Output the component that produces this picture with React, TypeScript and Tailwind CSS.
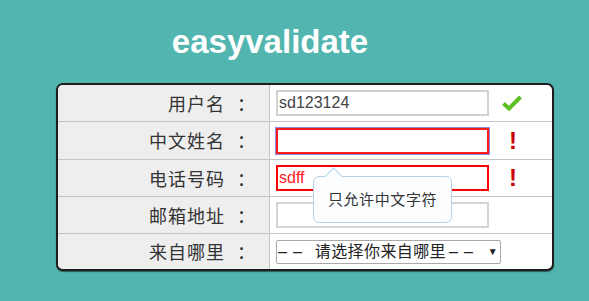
import { ReactNode } from 'react'

const CJK = "font-['Noto_Sans_CJK_SC',sans-serif]"
const SANS = "font-['Liberation_Sans','Noto_Sans_CJK_SC',sans-serif]"

function Check() {
  return (
    <svg width="20" height="16" viewBox="0 0 20 16" className="ml-[13px]">
      <path d="M1.5 8.5 L7 13.5 L18.5 2" fill="none" stroke="#5cbf24" strokeWidth="4" strokeLinejoin="miter" />
    </svg>
  )
}

function Bang() {
  return <span className={`ml-[20px] text-[24px] font-bold leading-none text-[#cc0000] ${SANS}`}>!</span>
}

function Dashes() {
  return (
    <span className="flex gap-[6px]">
      <span>–</span>
      <span>–</span>
    </span>
  )
}

function Row({ label, h, last, children }: { label: string; h: string; last?: boolean; children: ReactNode }) {
  return (
    <div className={`flex ${h} ${last ? '' : 'border-b border-[#c4c4c4]'}`}>
      <div className={`w-[212px] shrink-0 bg-[#eeeeee] border-r border-[#c4c4c4] flex items-center justify-end pr-[14px] text-[18px] text-[#333] ${CJK}`}>
        <span className="tracking-[1px]">{label}</span>
        <span className="ml-[12px]">：</span>
      </div>
      <div className="flex-1 flex items-center pl-[6px] relative">{children}</div>
    </div>
  )
}

export default function App() {
  return (
    <div className="w-[589px] h-[301px] bg-[#52b5b0] overflow-hidden">
      <div className={`w-[540px] pt-[26px] text-center text-white text-[33px] leading-[32px] font-bold ${SANS}`}>
        easyvalidate
      </div>

      <div className="ml-[56px] mt-[25px] w-[498px] border-2 border-[#1e1e1e] rounded-[7px] bg-white shadow-[0_1px_1px_rgba(0,0,0,0.5)]">
        <div className="rounded-[5px] overflow-hidden">
          <Row label="用户名" h="h-[37px]">
            <div className={`w-[213px] h-[26px] border-2 border-[#d2d2d2] flex items-center pl-[1px] text-[16px] text-[#444] ${SANS}`}>
              sd123124
            </div>
            <Check />
          </Row>
          <Row label="中文姓名" h="h-[38px]">
            <div className="w-[213px] h-[26px] border-2 border-[#ff1a1a] outline outline-1 outline-[#8a8ae6]" />
            <Bang />
          </Row>
          <Row label="电话号码" h="h-[37px]">
            <div className={`w-[213px] h-[26px] border-2 border-[#ff0000] flex items-center pl-[1px] text-[16px] text-[#ff2020] ${SANS}`}>
              sdff
            </div>
            <Bang />
          </Row>
          <Row label="邮箱地址" h="h-[37px]">
            <div className="w-[213px] h-[26px] border-2 border-[#d4d4d4]" />
          </Row>
          <Row label="来自哪里" h="h-[35px]" last>
            <div className={`w-[225px] h-[24px] border border-[#a9a9a9] rounded-[2px] flex items-center pl-[1px] text-[16px] text-[#222] ${SANS}`}>
              <Dashes />
              <span className="ml-[13px] tracking-[0.4px]">请选择你来自哪里</span>
              <span className="ml-[3px]"><Dashes /></span>
              <span className="ml-[15px] text-[10px]">▼</span>
            </div>
          </Row>
        </div>
      </div>

      {/* tooltip over the phone field */}
      <div className="absolute left-[313px] top-[176px]">
        <div className="relative w-[139px] h-[47px] rounded-[6px] border border-[#b5d2e8] bg-[#fbfdff] flex items-center justify-center">
          <span className={`text-[15px] tracking-[0.6px] text-[#333] ${CJK}`}>只允许中文字符</span>
          <div className="absolute left-[13px] top-[-7px] w-[13px] h-[13px] rotate-45 border-l border-t border-[#b5d2e8] bg-[#fbfdff]" />
        </div>
      </div>
    </div>
  )
}
